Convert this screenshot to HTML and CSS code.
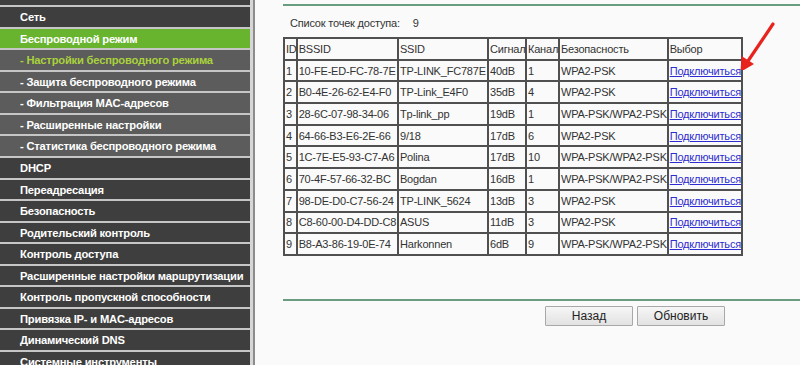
FILE: index.html
```html
<!DOCTYPE html>
<html lang="ru">
<head>
  <meta charset="UTF-8" />
  <title>Беспроводной режим - Поиск точек доступа</title>
  <link rel="stylesheet" href="styles.css">
</head>
<body>

<div class="page">
  <nav class="side">
    <ul class="menu">
      <li class="cut"></li>
      <li>Сеть</li>
      <li class="active">Беспроводной режим</li>
      <li class="sub current">- Настройки беспроводного режима</li>
      <li class="sub">- Защита беспроводного режима</li>
      <li class="sub">- Фильтрация MAC-адресов</li>
      <li class="sub">- Расширенные настройки</li>
      <li class="sub">- Статистика беспроводного режима</li>
      <li>DHCP</li>
      <li>Переадресация</li>
      <li>Безопасность</li>
      <li>Родительский контроль</li>
      <li>Контроль доступа</li>
      <li>Расширенные настройки маршрутизации</li>
      <li>Контроль пропускной способности</li>
      <li>Привязка IP- и MAC-адресов</li>
      <li>Динамический DNS</li>
      <li>Системные инструменты</li>
    </ul>
  </nav>

  <main class="main">
    <div class="rule"></div>
    <p class="count">Список точек доступа:<span>9</span></p>

    <table class="ap-list">
      <colgroup>
        <col class="c-id"><col class="c-bssid"><col class="c-ssid"><col class="c-sig">
        <col class="c-ch"><col class="c-sec"><col class="c-sel">
      </colgroup>
      <tr><td>ID</td><td>BSSID</td><td>SSID</td><td>Сигнал</td><td>Канал</td><td>Безопасность</td><td>Выбор</td></tr>
      <tr><td>1</td><td>10-FE-ED-FC-78-7E</td><td>TP-LINK_FC787E</td><td>40dB</td><td>1</td><td>WPA2-PSK</td><td><a href="#">Подключиться</a></td></tr>
      <tr><td>2</td><td>B0-4E-26-62-E4-F0</td><td>TP-Link_E4F0</td><td>35dB</td><td>4</td><td>WPA2-PSK</td><td><a href="#">Подключиться</a></td></tr>
      <tr><td>3</td><td>28-6C-07-98-34-06</td><td>Tp-link_pp</td><td>19dB</td><td>1</td><td>WPA-PSK/WPA2-PSK</td><td><a href="#">Подключиться</a></td></tr>
      <tr><td>4</td><td>64-66-B3-E6-2E-66</td><td>9/18</td><td>17dB</td><td>6</td><td>WPA2-PSK</td><td><a href="#">Подключиться</a></td></tr>
      <tr><td>5</td><td>1C-7E-E5-93-C7-A6</td><td>Polina</td><td>17dB</td><td>10</td><td>WPA-PSK/WPA2-PSK</td><td><a href="#">Подключиться</a></td></tr>
      <tr><td>6</td><td>70-4F-57-66-32-BC</td><td>Bogdan</td><td>16dB</td><td>1</td><td>WPA-PSK/WPA2-PSK</td><td><a href="#">Подключиться</a></td></tr>
      <tr><td>7</td><td>98-DE-D0-C7-56-24</td><td>TP-LINK_5624</td><td>13dB</td><td>3</td><td>WPA2-PSK</td><td><a href="#">Подключиться</a></td></tr>
      <tr><td>8</td><td>C8-60-00-D4-DD-C8</td><td>ASUS</td><td>11dB</td><td>3</td><td>WPA2-PSK</td><td><a href="#">Подключиться</a></td></tr>
      <tr><td>9</td><td>B8-A3-86-19-0E-74</td><td>Harkonnen</td><td>6dB</td><td>9</td><td>WPA-PSK/WPA2-PSK</td><td><a href="#">Подключиться</a></td></tr>
    </table>

    <div class="rule bottom"></div>
    <div class="actions">
      <button>Назад</button>
      <button>Обновить</button>
    </div>

    <!-- пометка на скриншоте -->
    <svg class="arrow" width="50" height="60" viewBox="0 0 50 60">
      <line x1="45" y1="14" x2="20" y2="51" stroke="#e8231d" stroke-width="3.2" stroke-linecap="round"/>
      <polygon points="12.5,62 13.5,46 26,54" fill="#e8231d"/>
    </svg>
  </main>
</div>

</body>
</html>
```

FILE: styles.css
```css
body {
  margin: 0;
  height: 365px;
  overflow: hidden;
  background: #fafafa;
  font-family: "Liberation Sans", Arial, sans-serif;
}

.page {
  display: flex;
  height: 365px;
}

/* левое меню */
.side {
  width: 250px;
  flex: none;
  background: #c6c6c6;
  border-right: 3px solid #d6d6d6;
}

.menu {
  list-style: none;
  margin: -14.4px 0 0;
  padding: 0;
}

.menu li {
  height: 19.56px;
  line-height: 20px;
  margin-bottom: 2px;
  padding-left: 20px;
  background: #3e3e3e;
  color: #fff;
  font-size: 11.2px;
  font-weight: bold;
  letter-spacing: -0.2px;
  white-space: nowrap;
}

.menu li.active {
  background: #68b42f;
}

.menu li.sub {
  background: #5c5c5c;
}

.menu li.current {
  color: #a9d23c;
}

/* правая часть */
.main {
  position: relative;
  flex: 1;
  border-left: 2px solid #8c8c8c;
  padding-left: 28px;
}

.rule {
  height: 2px;
  margin-top: 4px;
  background: #6a9c80;
}

.rule.bottom {
  margin-top: 43px;
}

.count {
  margin: 11px 0 0 7px;
  height: 20px;
  font-size: 11px;
  letter-spacing: -0.2px;
  color: #333;
}

.count span {
  margin-left: 13px;
}

.ap-list {
  border-collapse: collapse;
  table-layout: fixed;
  width: 460px;
  font-size: 11px;
  letter-spacing: -0.2px;
  color: #333;
}

.ap-list td {
  height: 19.7px;
  padding: 0 0 0 1px;
  border: 2px solid #505050;
  white-space: nowrap;
  overflow: visible;
}

.c-id { width: 12.7px; }
.c-bssid { width: 101.3px; }
.c-ssid { width: 90px; }
.c-sig { width: 38px; }
.c-ch { width: 33px; }
.c-sec { width: 108.7px; }
.c-sel { width: 74.3px; }

.ap-list a {
  color: #2c2cd0;
}

.actions {
  display: flex;
  gap: 4px;
  margin: 5px 0 0 262px;
}

.actions button {
  width: 88px;
  height: 20px;
  padding: 0;
  font-family: "Liberation Sans", Arial, sans-serif;
  font-size: 12px;
  color: #222;
  background: linear-gradient(#f6f6f6, #e2e2e2);
  border: 1px solid #a8a8a8;
  border-radius: 1px;
}

.arrow {
  position: absolute;
  left: 473px;
  top: 10px;
}
```
